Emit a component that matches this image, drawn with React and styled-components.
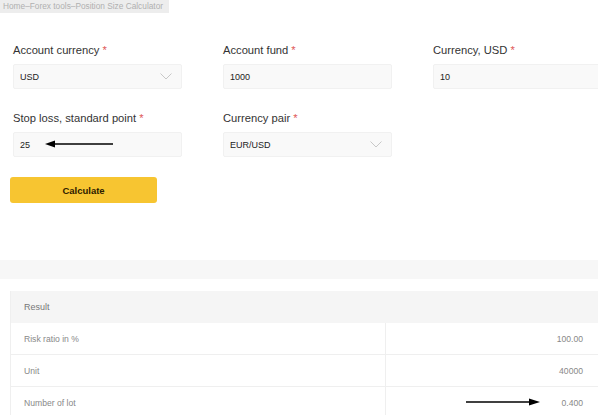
import React from "react";
import styled, { createGlobalStyle } from "styled-components";

const Global = createGlobalStyle`
  html, body { margin: 0; padding: 0; background: #fff; }
  body { font-family: "Liberation Sans", Arial, sans-serif; color: #333; }
  * { box-sizing: border-box; }
`;

const Page = styled.div`
  width: 598px;
  height: 415px;
  overflow: hidden;
  position: relative;
`;

const Breadcrumb = styled.div`
  width: fit-content;
  height: 13px;
  line-height: 13px;
  padding: 0 6px 0 3px;
  background: #ededed;
  color: #b0b0b0;
  font-size: 8.3px;
`;

const Form = styled.div`
  padding: 31px 0 0 10px;
`;

const Grid = styled.div`
  display: grid;
  grid-template-columns: repeat(3, 169px);
  column-gap: 41px;
  row-gap: 23px;
  padding-left: 3px;
`;

const Field = styled.div`
  display: flex;
  flex-direction: column;
  gap: 7px;
  position: relative;
`;

const Label = styled.div`
  font-size: 11.2px;
  line-height: 13px;
  color: #333;
  white-space: nowrap;
`;

const Star = styled.span`
  color: #e05a5a;
  margin-left: 3px;
`;

const Input = styled.div`
  height: 25px;
  background: #f9f9f9;
  border: 1px solid #f1f1f1;
  border-radius: 2px;
  display: flex;
  align-items: center;
  justify-content: space-between;
  padding: 0 6px 0 6px;
  font-size: 9px;
  color: #222;
`;

const Chevron = styled.svg`
  width: 12px;
  height: 7px;
  margin-right: 3px;
`;

const Button = styled.button`
  margin-top: 20px;
  width: 147px;
  height: 26px;
  border: none;
  border-radius: 3px;
  background: #f7c531;
  color: #2d2000;
  font-family: "Liberation Sans", Arial, sans-serif;
  font-size: 9.5px;
  font-weight: bold;
  display: block;
`;

const Band = styled.div`
  margin-top: 57px;
  height: 19px;
  background: #f7f7f7;
`;

const Table = styled.div`
  margin: 12px 0 0 10px;
  border-left: 1px solid #efefef;
  font-size: 8.6px;
  color: #888;
`;

const Header = styled.div`
  height: 32px;
  display: flex;
  align-items: center;
  padding-left: 13px;
  background: #f5f5f5;
  color: #777;
  font-size: 9px;
`;

const Row = styled.div`
  display: grid;
  grid-template-columns: 374px 1fr;
  height: 32px;
  border-bottom: 1px solid #efefef;
`;

const Cell = styled.div`
  display: flex;
  align-items: center;
  padding: 0 15px 0 13px;
  justify-content: ${(p) => (p.$right ? "flex-end" : "flex-start")};
  border-left: ${(p) => (p.$right ? "1px solid #efefef" : "none")};
  position: relative;
`;

const Arrow = styled.svg`
  position: absolute;
  pointer-events: none;
`;

const ChevronIcon = () => (
  <Chevron viewBox="0 0 12 7">
    <path d="M0.5 0.5 L6 6 L11.5 0.5" fill="none" stroke="#c8c8c8" strokeWidth="1" />
  </Chevron>
);

export default function App() {
  return (
    <Page>
      <Global />
      <Breadcrumb>Home–Forex tools–Position Size Calculator</Breadcrumb>
      <Form>
        <Grid>
          <Field>
            <Label>Account currency<Star>*</Star></Label>
            <Input>USD<ChevronIcon /></Input>
          </Field>
          <Field>
            <Label>Account fund<Star>*</Star></Label>
            <Input>1000</Input>
          </Field>
          <Field>
            <Label>Currency, USD<Star>*</Star></Label>
            <Input>10</Input>
          </Field>
          <Field>
            <Label>Stop loss, standard point<Star>*</Star></Label>
            <Input>25</Input>
            <Arrow style={{ left: 32, top: 27 }} width="70" height="10" viewBox="0 0 70 10">
              <line x1="8" y1="5" x2="68" y2="5" stroke="#000" strokeWidth="1.5" />
              <polygon points="0,5 10,1.5 10,8.5" fill="#000" />
            </Arrow>
          </Field>
          <Field>
            <Label>Currency pair<Star>*</Star></Label>
            <Input>EUR/USD<ChevronIcon /></Input>
          </Field>
        </Grid>
        <Button>Calculate</Button>
      </Form>
      <Band />
      <Table>
        <Header>Result</Header>
        <Row>
          <Cell>Risk ratio in %</Cell>
          <Cell $right>100.00</Cell>
        </Row>
        <Row>
          <Cell>Unit</Cell>
          <Cell $right>40000</Cell>
        </Row>
        <Row>
          <Cell>Number of lot</Cell>
          <Cell $right>
            <Arrow style={{ left: 80, top: 10 }} width="74" height="10" viewBox="0 0 74 10">
              <line x1="0" y1="5" x2="64" y2="5" stroke="#000" strokeWidth="1.5" />
              <polygon points="74,5 63,1.5 63,8.5" fill="#000" />
            </Arrow>
            0.400
          </Cell>
        </Row>
      </Table>
    </Page>
  );
}
